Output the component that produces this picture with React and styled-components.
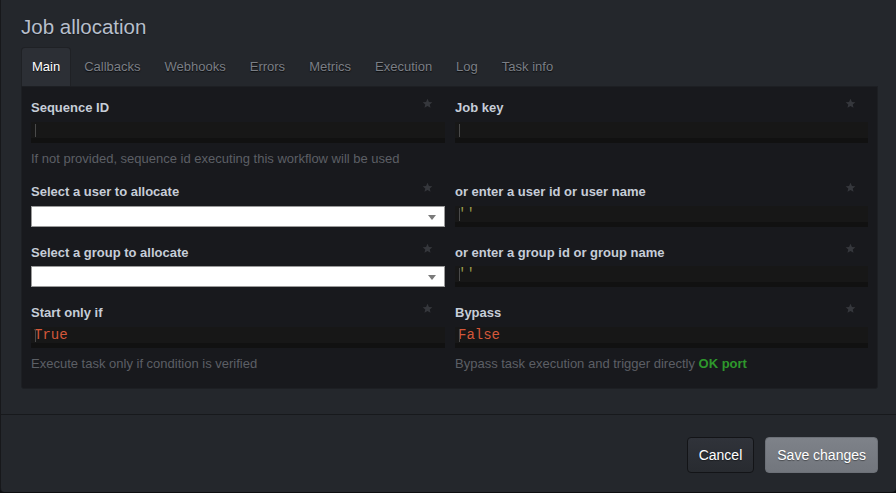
import React from "react";
import styled, { createGlobalStyle } from "styled-components";

const Global = createGlobalStyle`
  html, body { margin: 0; padding: 0; background: #0d0e10; }
  body { font-family: "Liberation Sans", Helvetica, Arial, sans-serif; }
  * { box-sizing: border-box; }
`;

const Modal = styled.div`
  width: 896px;
  height: 492px;
  background: #24272c;
  border-left: 1px solid #17181b;
  border-radius: 0 0 4px 4px;
  display: flex;
  flex-direction: column;
`;

const Body = styled.div`
  padding: 15px 18px 0 20px;
`;

const Title = styled.h1`
  margin: 0;
  font-size: 20.5px;
  line-height: 24px;
  font-weight: normal;
  color: #b7bfcc;
  text-shadow: 0 1px 1px rgba(0,0,0,0.4);
`;

const Tabs = styled.ul`
  list-style: none;
  margin: 8px 0 0;
  padding: 0;
  display: flex;
  height: 39px;
`;

const Tab = styled.li`
  padding: 0 10px;
  margin-right: 2px;
  font-size: 13px;
  line-height: 38px;
  border-radius: 4px 4px 0 0;
  color: ${p => (p.$active ? "#ffffff" : "#7b7f86")};
  background: ${p => (p.$active ? "#2c2f35" : "transparent")};
  border: 1px solid ${p => (p.$active ? "#1f2125" : "transparent")};
  border-bottom: none;
  text-shadow: 0 1px 1px rgba(0,0,0,0.7);
`;

const Panel = styled.div`
  background: #18191d;
  border: 1px solid #1d1f23;
  border-radius: 0 0 3px 3px;
  padding: 13px 9px 17px 9px;
  display: grid;
  grid-template-columns: 414px 413px;
  column-gap: 10px;
  row-gap: 18px;
  align-items: start;
`;

const Field = styled.div`
  position: relative;
  display: flex;
  flex-direction: column;
`;

const Label = styled.label`
  font-size: 13px;
  line-height: 15px;
  font-weight: bold;
  color: #c6cdd8;
  margin-bottom: ${p => (p.$tight ? "6px" : "7px")};
`;

const Star = styled.svg`
  position: absolute;
  right: 12px;
  top: -2px;
  width: 11px;
  height: 11px;
`;

const CodeBox = styled.div`
  height: 21px;
  background: #171717;
  border-bottom: 5px solid #111111;
  padding-left: 3px;
  display: flex;
  align-items: center;
  position: relative;
`;

const Cursor = styled.span`
  position: absolute;
  left: 4px;
  top: 2px;
  width: 1px;
  height: 13px;
  background: #4a4a4a;
`;

const Code = styled.span`
  font-family: "Liberation Mono", "DejaVu Sans Mono", monospace;
  font-size: 14px;
  line-height: 16px;
  color: ${p => p.$color};
`;

const Select = styled.div`
  height: 21px;
  background: #ffffff;
  border: 1px solid #9a9a9a;
  position: relative;
  &::after {
    content: "";
    position: absolute;
    right: 8px;
    top: 8px;
    border-left: 4px solid transparent;
    border-right: 4px solid transparent;
    border-top: 5px solid #7a7a7a;
  }
`;

const Help = styled.div`
  margin-top: 8px;
  font-size: 13px;
  line-height: 15px;
  color: #5c5f65;
`;

const Ok = styled.span`
  color: #2e982c;
  font-weight: bold;
`;

const Footer = styled.div`
  margin-top: auto;
  border-top: 1px solid #17191c;
  height: 78px;
  padding: 22px 18px 0 0;
  display: flex;
  justify-content: flex-end;
  gap: 11px;
`;

const Button = styled.button`
  height: 36px;
  padding: 0 11px;
  font-family: "Liberation Sans", Helvetica, Arial, sans-serif;
  font-size: 14px;
  border-radius: 4px;
  color: #ffffff;
  text-shadow: 0 1px 1px rgba(0,0,0,0.4);
  background: ${p => (p.$primary ? "linear-gradient(#7e8289, #72767d)" : "linear-gradient(#30333a, #282b30)")};
  border: 1px solid ${p => (p.$primary ? "#6c7077" : "#131417")};
`;

const StarIcon = () => (
  <Star viewBox="0 0 24 24">
    <path
      d="M12 1.5l3.1 7 7.4.6-5.6 4.9 1.7 7.4L12 17.5l-6.6 3.9 1.7-7.4L1.5 9.1l7.4-.6z"
      fill="#35373c"
    />
  </Star>
);

const CodeField = ({ value, color }) => (
  <CodeBox>
    <Cursor />
    {value ? <Code $color={color}>{value}</Code> : null}
  </CodeBox>
);

const tabs = ["Main", "Callbacks", "Webhooks", "Errors", "Metrics", "Execution", "Log", "Task info"];

export default function App() {
  return (
    <>
      <Global />
      <Modal>
        <Body>
          <Title>Job allocation</Title>
          <Tabs>
            {tabs.map((t, i) => (
              <Tab key={t} $active={i === 0}>{t}</Tab>
            ))}
          </Tabs>
          <Panel>
            <Field>
              <StarIcon />
              <Label>Sequence ID</Label>
              <CodeField />
              <Help>If not provided, sequence id executing this workflow will be used</Help>
            </Field>
            <Field>
              <StarIcon />
              <Label>Job key</Label>
              <CodeField />
            </Field>
            <Field>
              <StarIcon />
              <Label>Select a user to allocate</Label>
              <Select />
            </Field>
            <Field>
              <StarIcon />
              <Label>or enter a user id or user name</Label>
              <CodeField value="''" color="#9a9c4c" />
            </Field>
            <Field>
              <StarIcon />
              <Label $tight>Select a group to allocate</Label>
              <Select />
            </Field>
            <Field>
              <StarIcon />
              <Label $tight>or enter a group id or group name</Label>
              <CodeField value="''" color="#9a9c4c" />
            </Field>
            <Field>
              <StarIcon />
              <Label>Start only if</Label>
              <CodeField value="True" color="#d4573a" />
              <Help>Execute task only if condition is verified</Help>
            </Field>
            <Field>
              <StarIcon />
              <Label>Bypass</Label>
              <CodeField value="False" color="#d4573a" />
              <Help>Bypass task execution and trigger directly <Ok>OK port</Ok></Help>
            </Field>
          </Panel>
        </Body>
        <Footer>
          <Button>Cancel</Button>
          <Button $primary>Save changes</Button>
        </Footer>
      </Modal>
    </>
  );
}
